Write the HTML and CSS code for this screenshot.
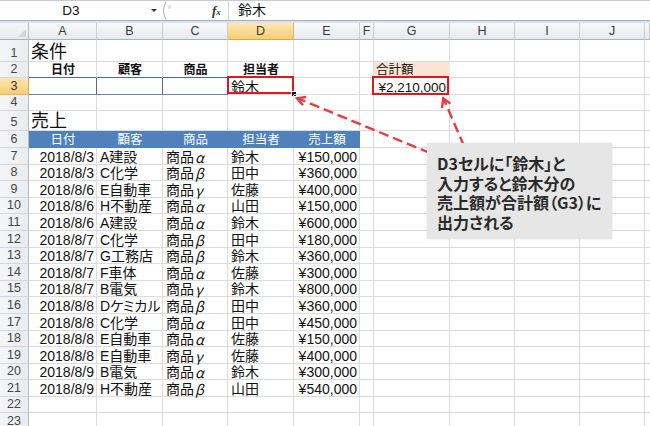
FILE: index.html
```html
<!DOCTYPE html>
<html lang="ja">
<head>
<meta charset="utf-8">
<title>Excel sheet</title>
<link rel="stylesheet" href="styles.css">
</head>
<body>
<div class="app">
  <div class="fbar">
    <div class="namebox"><span class="nb-text">D3</span><span class="nb-arrow"></span></div>
    <svg class="grip" width="20" height="19" viewBox="0 0 20 19"><path d="M6 0.5 Q1 9.5 6 18.5" fill="none" stroke="#a7adb5" stroke-width="1"/><circle cx="9.5" cy="6" r="2" fill="#dfe2e6"/></svg>
    <div class="fbar-space"></div>
    <div class="fx"><i>f</i><span class="fx-x">x</span></div>
    <div class="formula">鈴木</div>
  </div>
  <div class="fgap"></div>

  <div class="sheet">
    <div class="row h-hdr">
      <div class="c corner"><span class="tri"></span></div>
      <div class="c ch">A</div><div class="c ch">B</div><div class="c ch">C</div><div class="c ch sel">D</div><div class="c ch">E</div><div class="c ch">F</div><div class="c ch">G</div><div class="c ch">H</div><div class="c ch">I</div><div class="c ch">J</div><div class="c ch"></div>
    </div>

    <div class="row h1">
      <div class="c rh">1</div>
      <div class="c big">条件</div><div class="c"></div><div class="c"></div><div class="c"></div><div class="c"></div><div class="c"></div><div class="c"></div><div class="c"></div><div class="c"></div><div class="c"></div><div class="c"></div>
    </div>

    <div class="row h">
      <div class="c rh">2</div>
      <div class="c hb ctr bb">日付</div><div class="c hb ctr bb">顧客</div><div class="c hb ctr bb">商品</div><div class="c hb ctr">担当者</div><div class="c"></div><div class="c"></div><div class="c peach small">合計額</div><div class="c"></div><div class="c"></div><div class="c"></div><div class="c"></div>
    </div>

    <div class="row h">
      <div class="c rh rsel">3</div>
      <div class="c bx"></div><div class="c bx"></div><div class="c bx"></div>
      <div class="c active">鈴木<span class="redbox red-d"></span><span class="handle"></span></div>
      <div class="c"></div><div class="c"></div>
      <div class="c r total">¥2,210,000<span class="redbox red-g"></span></div>
      <div class="c"></div><div class="c"></div><div class="c"></div><div class="c"></div>
    </div>

    <div class="row h">
      <div class="c rh">4</div>
      <div class="c"></div><div class="c"></div><div class="c"></div><div class="c"></div><div class="c"></div><div class="c"></div><div class="c"></div><div class="c"></div><div class="c"></div><div class="c"></div><div class="c"></div>
    </div>

    <div class="row h5">
      <div class="c rh">5</div>
      <div class="c big">売上</div><div class="c"></div><div class="c"></div><div class="c"></div><div class="c"></div><div class="c"></div><div class="c"></div><div class="c"></div><div class="c"></div><div class="c"></div><div class="c"></div>
    </div>

    <div class="row h">
      <div class="c rh">6</div>
      <div class="c th">日付</div><div class="c th">顧客</div><div class="c th">商品</div><div class="c th">担当者</div><div class="c th">売上額</div>
      <div class="c"></div><div class="c"></div><div class="c"></div><div class="c"></div><div class="c"></div><div class="c"></div>
    </div>

    <div class="row h"><div class="c rh">7</div><div class="c r">2018/8/3</div><div class="c">A建設</div><div class="c">商品<span class="gk">α</span></div><div class="c">鈴木</div><div class="c r">¥150,000</div><div class="c"></div><div class="c"></div><div class="c"></div><div class="c"></div><div class="c"></div><div class="c"></div></div>
    <div class="row h"><div class="c rh">8</div><div class="c r">2018/8/3</div><div class="c">C化学</div><div class="c">商品<span class="gk">β</span></div><div class="c">田中</div><div class="c r">¥360,000</div><div class="c"></div><div class="c"></div><div class="c"></div><div class="c"></div><div class="c"></div><div class="c"></div></div>
    <div class="row h"><div class="c rh">9</div><div class="c r">2018/8/6</div><div class="c">E自動車</div><div class="c">商品<span class="gk">γ</span></div><div class="c">佐藤</div><div class="c r">¥400,000</div><div class="c"></div><div class="c"></div><div class="c"></div><div class="c"></div><div class="c"></div><div class="c"></div></div>
    <div class="row h"><div class="c rh">10</div><div class="c r">2018/8/6</div><div class="c">H不動産</div><div class="c">商品<span class="gk">α</span></div><div class="c">山田</div><div class="c r">¥150,000</div><div class="c"></div><div class="c"></div><div class="c"></div><div class="c"></div><div class="c"></div><div class="c"></div></div>
    <div class="row h"><div class="c rh">11</div><div class="c r">2018/8/6</div><div class="c">A建設</div><div class="c">商品<span class="gk">α</span></div><div class="c">鈴木</div><div class="c r">¥600,000</div><div class="c"></div><div class="c"></div><div class="c"></div><div class="c"></div><div class="c"></div><div class="c"></div></div>
    <div class="row h"><div class="c rh">12</div><div class="c r">2018/8/7</div><div class="c">C化学</div><div class="c">商品<span class="gk">β</span></div><div class="c">田中</div><div class="c r">¥180,000</div><div class="c"></div><div class="c"></div><div class="c"></div><div class="c"></div><div class="c"></div><div class="c"></div></div>
    <div class="row h"><div class="c rh">13</div><div class="c r">2018/8/7</div><div class="c">G工務店</div><div class="c">商品<span class="gk">β</span></div><div class="c">鈴木</div><div class="c r">¥360,000</div><div class="c"></div><div class="c"></div><div class="c"></div><div class="c"></div><div class="c"></div><div class="c"></div></div>
    <div class="row h"><div class="c rh">14</div><div class="c r">2018/8/7</div><div class="c">F車体</div><div class="c">商品<span class="gk">α</span></div><div class="c">佐藤</div><div class="c r">¥300,000</div><div class="c"></div><div class="c"></div><div class="c"></div><div class="c"></div><div class="c"></div><div class="c"></div></div>
    <div class="row h"><div class="c rh">15</div><div class="c r">2018/8/7</div><div class="c">B電気</div><div class="c">商品<span class="gk">γ</span></div><div class="c">鈴木</div><div class="c r">¥800,000</div><div class="c"></div><div class="c"></div><div class="c"></div><div class="c"></div><div class="c"></div><div class="c"></div></div>
    <div class="row h"><div class="c rh">16</div><div class="c r">2018/8/8</div><div class="c">Dケミカル</div><div class="c">商品<span class="gk">β</span></div><div class="c">田中</div><div class="c r">¥360,000</div><div class="c"></div><div class="c"></div><div class="c"></div><div class="c"></div><div class="c"></div><div class="c"></div></div>
    <div class="row h"><div class="c rh">17</div><div class="c r">2018/8/8</div><div class="c">C化学</div><div class="c">商品<span class="gk">α</span></div><div class="c">田中</div><div class="c r">¥450,000</div><div class="c"></div><div class="c"></div><div class="c"></div><div class="c"></div><div class="c"></div><div class="c"></div></div>
    <div class="row h"><div class="c rh">18</div><div class="c r">2018/8/8</div><div class="c">E自動車</div><div class="c">商品<span class="gk">α</span></div><div class="c">佐藤</div><div class="c r">¥150,000</div><div class="c"></div><div class="c"></div><div class="c"></div><div class="c"></div><div class="c"></div><div class="c"></div></div>
    <div class="row h"><div class="c rh">19</div><div class="c r">2018/8/8</div><div class="c">E自動車</div><div class="c">商品<span class="gk">γ</span></div><div class="c">佐藤</div><div class="c r">¥400,000</div><div class="c"></div><div class="c"></div><div class="c"></div><div class="c"></div><div class="c"></div><div class="c"></div></div>
    <div class="row h"><div class="c rh">20</div><div class="c r">2018/8/9</div><div class="c">B電気</div><div class="c">商品<span class="gk">α</span></div><div class="c">鈴木</div><div class="c r">¥300,000</div><div class="c"></div><div class="c"></div><div class="c"></div><div class="c"></div><div class="c"></div><div class="c"></div></div>
    <div class="row h"><div class="c rh">21</div><div class="c r">2018/8/9</div><div class="c">H不動産</div><div class="c">商品<span class="gk">β</span></div><div class="c">山田</div><div class="c r">¥540,000</div><div class="c"></div><div class="c"></div><div class="c"></div><div class="c"></div><div class="c"></div><div class="c"></div></div>
    <div class="row h"><div class="c rh">22</div><div class="c"></div><div class="c"></div><div class="c"></div><div class="c"></div><div class="c"></div><div class="c"></div><div class="c"></div><div class="c"></div><div class="c"></div><div class="c"></div><div class="c"></div></div>
    <div class="row h"><div class="c rh">23</div><div class="c"></div><div class="c"></div><div class="c"></div><div class="c"></div><div class="c"></div><div class="c"></div><div class="c"></div><div class="c"></div><div class="c"></div><div class="c"></div><div class="c"></div></div>
  </div>

  <svg class="arrows" width="650" height="426" viewBox="0 0 650 426">
    <g fill="none" stroke="#ea3a44" stroke-width="2.4">
      <line x1="430" y1="153" x2="298" y2="98.5" stroke-dasharray="10 5"/>
      <polyline points="303,105.3 297,98.3 306.2,97" stroke-linejoin="miter"/>
      <line x1="464" y1="146" x2="444" y2="99.5" stroke-dasharray="10 5"/>
      <polyline points="442,108 443.3,98.4 450.4,103.6" stroke-linejoin="miter"/>
    </g>
  </svg>

  <div class="callout">
    <div class="cl">D3セルに「鈴木」と</div>
    <div class="cl">入力すると鈴木分の</div>
    <div class="cl">売上額が合計額（G3）に</div>
    <div class="cl">出力される</div>
  </div>
</div>
</body>
</html>
```

FILE: styles.css
```css
* { box-sizing: border-box; }

html, body {
  margin: 0;
  padding: 0;
}

body {
  width: 650px;
  height: 426px;
  overflow: hidden;
  background: #ffffff;
  font-family: "Liberation Sans", "Noto Sans CJK JP", sans-serif;
  color: #000;
}

.app {
  position: relative;
  width: 650px;
  height: 426px;
  overflow: hidden;
}

/* formula bar */
.fbar {
  display: flex;
  height: 21px;
  border-top: 1px solid #c7ccd2;
  border-bottom: 1px solid #a9b2bd;
  background: #fff;
}

.namebox {
  width: 160px;
  display: flex;
  align-items: center;
}

.nb-text {
  width: 142px;
  text-align: center;
  font-size: 13.5px;
  color: #111;
}

.nb-arrow {
  margin-left: 9px;
  width: 0;
  height: 0;
  border-left: 3px solid transparent;
  border-right: 3px solid transparent;
  border-top: 3px solid #333;
}

.grip {
  display: block;
  flex: none;
}

.fbar-space {
  width: 32px;
}

.fx {
  width: 16px;
  font-family: "Liberation Serif", serif;
  font-size: 13px;
  font-weight: bold;
  color: #333;
  line-height: 19px;
  white-space: nowrap;
}

.fx-x {
  font-style: italic;
  font-size: 9px;
}

.formula {
  flex: 1;
  border-left: 1px solid #cfd3d8;
  padding-left: 9px;
  font-size: 14px;
  line-height: 19px;
  color: #111;
}

.fgap {
  height: 2px;
  background: #dde2e8;
}

/* sheet */
.row {
  display: grid;
  grid-template-columns: 29px 68px 66px 65px 66px 66px 14px 76px 65px 65px 65px 5px;
}

.h-hdr { height: 17px; }
.h1 { height: 21.6px; }
.h { height: 16.6px; }
.h5 { height: 20px; }

.c {
  position: relative;
  display: flex;
  align-items: flex-end;
  padding: 0 2px 0 3px;
  border-right: 1px solid #dadcdf;
  border-bottom: 1px solid #dadcdf;
  font-size: 14px;
  line-height: 13px;
  white-space: nowrap;
  color: #111;
  font-feature-settings: "palt";
}

.r { justify-content: flex-end; }
.ctr { justify-content: center; }

.corner {
  background: linear-gradient(#f6f7f9, #e6e9ee);
  border-right: 1px solid #b9c0c8;
  border-bottom: 1px solid #a9b3bf;
}

.tri {
  position: absolute;
  right: 2px;
  bottom: 2px;
  width: 0;
  height: 0;
  border-left: 8px solid transparent;
  border-bottom: 8px solid #d3d7dc;
}

.ch {
  background: linear-gradient(#f8f9fb, #e6e9ee);
  border-right: 1px solid #c6ccd3;
  border-bottom: 1px solid #a9b3bf;
  justify-content: center;
  align-items: center;
  font-size: 12.5px;
  line-height: 15px;
  color: #3a3a3a;
  padding: 0;
}

.ch.sel {
  background: linear-gradient(#fce7b6, #f7cd73);
  border-right-color: #e2b35a;
  border-bottom-color: #e6a53c;
}

.rh {
  background: linear-gradient(90deg, #f4f5f7, #e9ecf0);
  border-right: 1px solid #b5bcc5;
  border-bottom: 1px solid #d3d7dc;
  justify-content: center;
  font-size: 12.5px;
  line-height: 14px;
  color: #454545;
  padding: 0 0 1px;
}

.rh.rsel {
  background: linear-gradient(#fce7b6, #f7cd73);
  border-right-color: #e2a844;
  border-bottom-color: #e6b55c;
  color: #333;
}

.big {
  font-size: 18px;
  line-height: 18px;
  padding-left: 2px;
}

.hb {
  font-weight: bold;
  font-size: 12px;
  line-height: 13px;
}

.bb { border-bottom-color: #4d6c96; }

.bx {
  border-right-color: #4d6c96;
  border-bottom-color: #6d87ab;
}

.peach {
  background: #fce4d5;
  border-right-color: #fce4d5;
}

.small {
  font-size: 12.5px;
  padding-left: 2px;
}

.th {
  background: #4f81bd;
  border-right-color: #4f81bd;
  border-bottom-color: #4f81bd;
  color: #fff;
  justify-content: center;
  font-size: 12.5px;
  line-height: 14px;
}

.gk {
  font-family: "Noto Sans CJK JP", sans-serif;
  font-style: italic;
  margin-left: 1px;
}

.total {
  font-size: 13.5px;
  padding-right: 3px;
}

.redbox {
  position: absolute;
  border: 2px solid #e4161d;
  pointer-events: none;
}

.red-d {
  left: -1px;
  top: -2px;
  right: -1px;
  bottom: 0;
}

.red-g {
  left: -2px;
  top: -2px;
  right: 0;
  bottom: -1px;
}

.handle {
  position: absolute;
  right: -4px;
  bottom: -3px;
  width: 6px;
  height: 6px;
  background: #111;
  border: 1px solid #fff;
}

.arrows {
  position: absolute;
  left: 0;
  top: 0;
  pointer-events: none;
  z-index: 2;
}

.callout {
  position: absolute;
  left: 427px;
  top: 143px;
  width: 185px;
  height: 96px;
  z-index: 3;
  background: #e6e6e6;
  box-shadow: 0 0 2px rgba(0, 0, 0, 0.12);
  padding: 12px 0 0 10px;
  font-family: "Noto Sans CJK JP", sans-serif;
  font-feature-settings: "palt";
  font-size: 16px;
  font-weight: 700;
  color: #2a2a2a;
  white-space: nowrap;
}

.cl {
  height: 19.5px;
  line-height: 16px;
}
```
